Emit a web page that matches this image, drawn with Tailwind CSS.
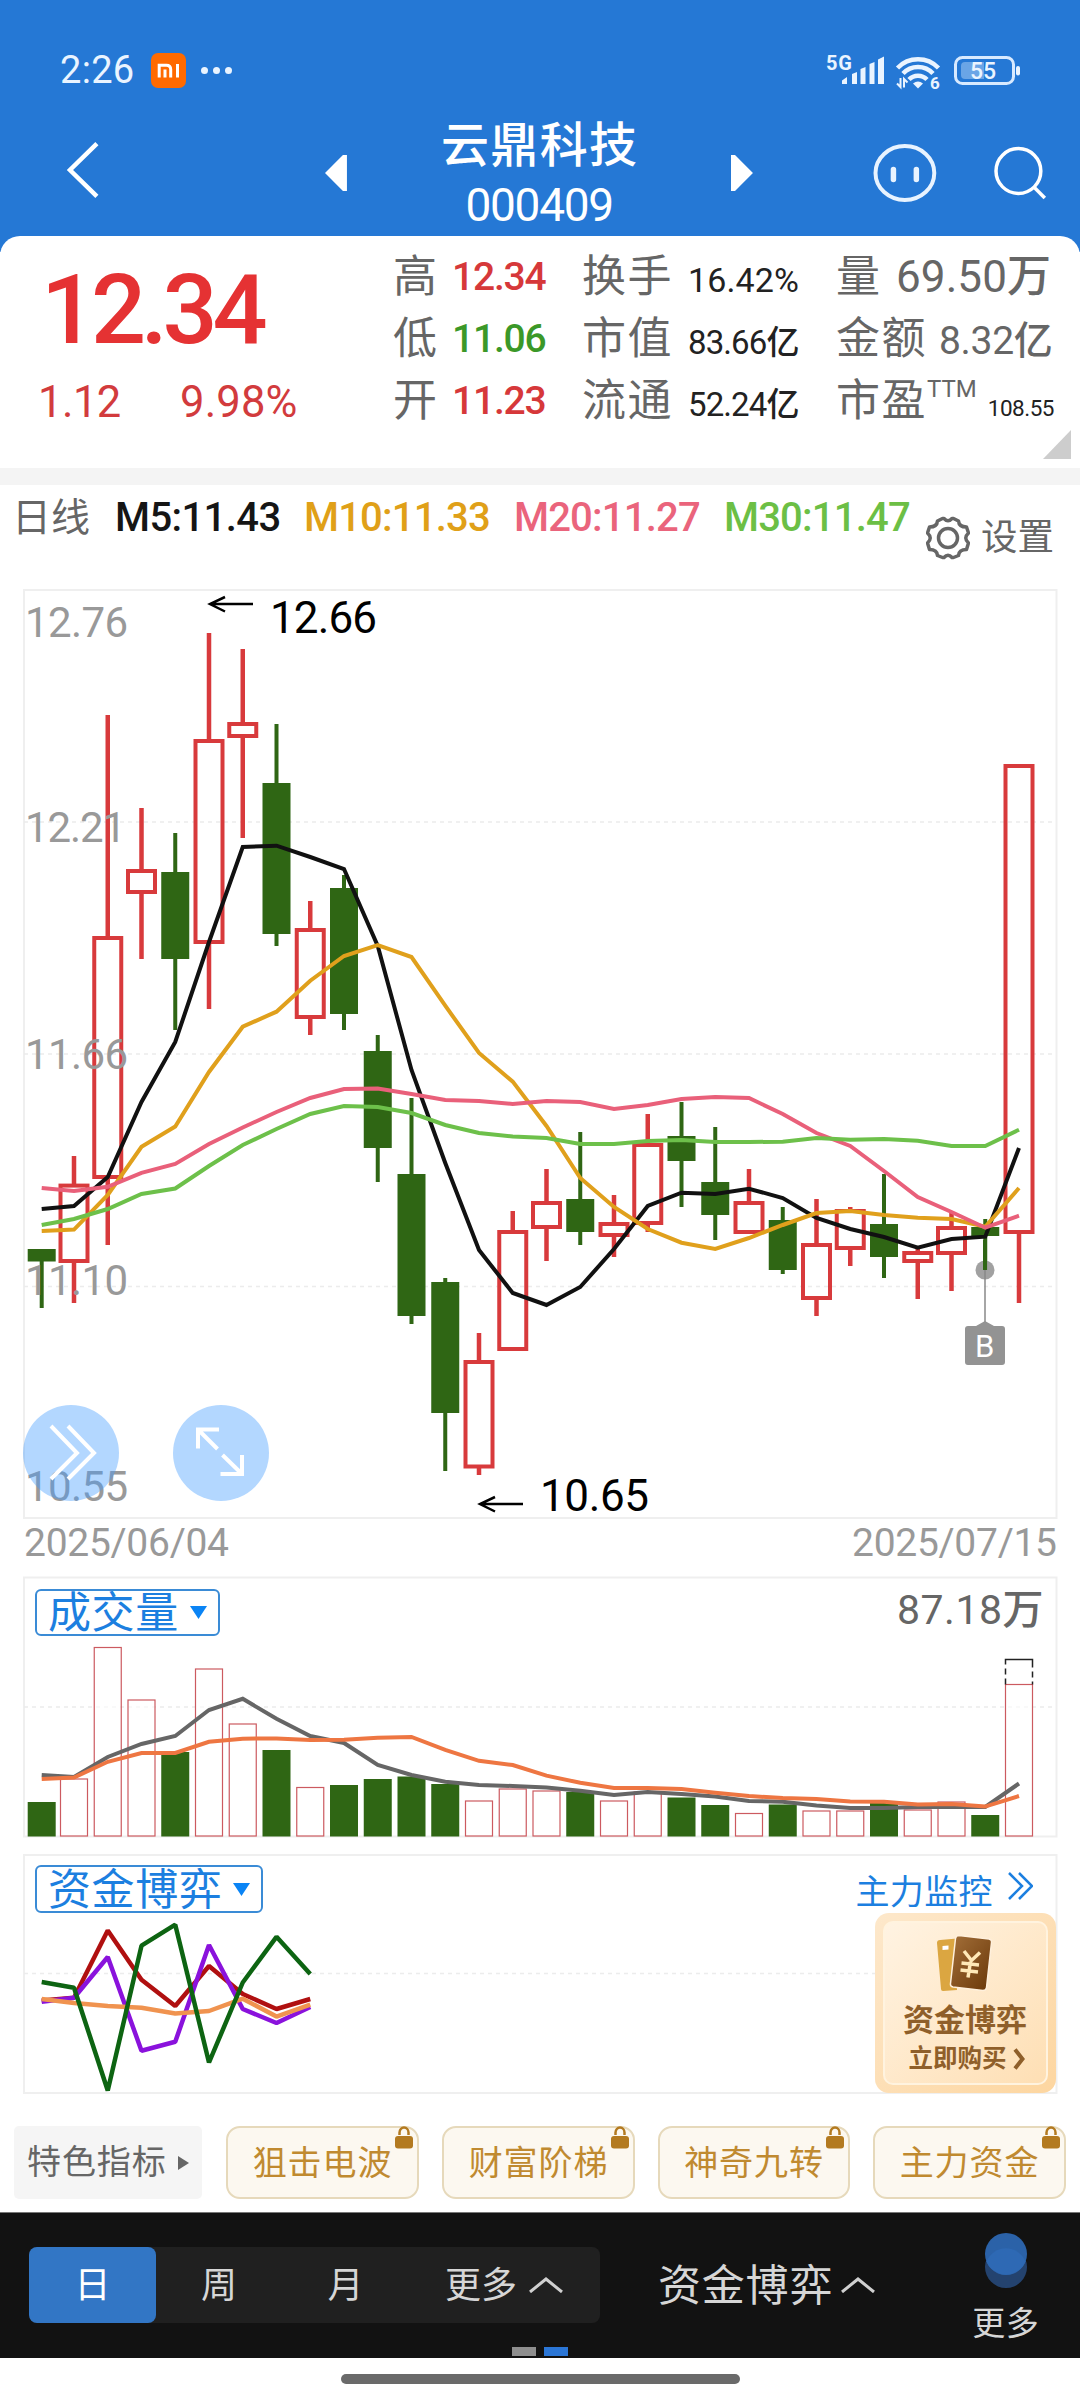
<!DOCTYPE html>
<html lang="zh-CN">
<head>
    <meta charset="UTF-8">
    <meta name="viewport" content="width=device-width, initial-scale=1.0">
    <script src="https://cdn.jsdelivr.net/npm/@tailwindcss/browser@4"></script>
    <title>云鼎科技 000409</title>
</head>
<body class="w-[1080px] h-[2400px] overflow-hidden bg-white font-['Roboto','Noto_Sans_CJK_SC',sans-serif] flex flex-col">
    <!-- header -->
    <div class="bg-[#2578d5] h-[252px] shrink-0 flex flex-col">
        <div class="h-[104px] pt-[36px] pl-[60px] pr-[59px] flex items-center text-[#eaf4ff]">
            <span class="text-[38px] leading-none tracking-[0.3px] w-[91px]">2:26</span>
            <svg class="w-[35px] h-[35px]" viewBox="0 0 35 35">
                <rect width="35" height="35" rx="7" fill="#ff6a00"/>
                <path d="M8.200 24.500V12.200h7.200c2.800 0 4.300 1.500 4.300 4.300v8M14 16.500v8M26.500 11v13.500" fill="none" stroke="#fff" stroke-width="3"/>
            </svg>
            <div class="flex gap-[5px] ml-[15px]">
                <div class="w-[7px] h-[7px] rounded-full bg-[#eaf4ff]"></div>
                <div class="w-[7px] h-[7px] rounded-full bg-[#eaf4ff]"></div>
                <div class="w-[7px] h-[7px] rounded-full bg-[#eaf4ff]"></div>
            </div>
            <svg class="w-[196px] h-[56px] ml-auto" viewBox="825 42 196 56" fill="#eaf4ff">
                <text x="826" y="69.500" font-size="20" font-weight="700" textLength="26">5G</text>
                <path d="M842 84v-3.500l5-3.500v7zM852 84V74l5-2v12zM860.500 84V69l5-2v17zM869.500 84V64l5-2v22zM878 84V59.500l6-3V84z"/>
                <g fill="none" stroke="#eaf4ff" stroke-width="4.500">
                    <path d="M897.500 68a28.500 28.500 0 0 1 41 0M903 73.500a20.500 20.500 0 0 1 30 0M909 79.500a12.500 12.500 0 0 1 18 0"/>
                </g>
                <path d="M913 83.500q5-4 10 0l-5 5z"/>
                <path d="M900.500 78v9l-3.500-3.500M904 87.500V79l3.500 3.500" fill="none" stroke="#eaf4ff" stroke-width="2"/>
                <text x="930" y="88.500" font-size="17" font-weight="700">6</text>
                <rect x="955.500" y="57.500" width="58" height="26" rx="7" fill="none" stroke="#d8eaff" stroke-width="3"/>
                <path d="M961 66q0-4 4-4h19v17h-19q-4 0-4-4z" fill="#6aa5e6"/>
                <rect x="1016" y="66" width="4" height="9.500" rx="2"/>
                <text x="970" y="79" font-size="23" font-weight="500" textLength="26">55</text>
            </svg>
        </div>
        <div class="h-[132px] flex items-center pl-[66px] pr-[33px] text-white">
            <svg class="w-[34px] h-[60px]" viewBox="66 141 34 60"><path d="M97 144.500 70 171l27 26.500" fill="none" stroke="#fff" stroke-width="4.500"/></svg>
            <svg class="w-[22px] h-[36px] ml-[225px] mt-[6px]" viewBox="0 0 22 36"><path d="M22 0v36h-4L0 18 18 0z" fill="#fff"/></svg>
            <div class="w-[386px] flex flex-col items-center pt-[9px]">
                <span class="text-[48px] leading-[60px] tracking-[1.300px] font-[450] pl-[1px]">云鼎科技</span>
                <span class="text-[46px] leading-[58px] tracking-[-1.300px] font-[450]">000409</span>
            </div>
            <svg class="w-[22px] h-[36px] mt-[6px]" viewBox="0 0 22 36"><path d="M0 0v36h4L22 18 4 0z" fill="#fff"/></svg>
            <svg class="w-[64px] h-[60px] ml-[120px] mt-[6px]" viewBox="0 0 64 60">
                <ellipse cx="32" cy="30" rx="29.500" ry="27" fill="none" stroke="#e8f3ff" stroke-width="4"/>
                <path d="M20.500 26.500v10M43.500 26.500v10" stroke="#e8f3ff" stroke-width="5.500" stroke-linecap="round"/>
            </svg>
            <svg class="w-[54px] h-[56px] ml-[56px] mt-[6px]" viewBox="994 145 54 56">
                <circle cx="1019.500" cy="171" r="22.500" fill="none" stroke="#fff" stroke-width="3.500"/>
                <path d="m1035 187 11 11" stroke="#fff" stroke-width="3.500"/>
            </svg>
        </div>
    </div>

    <!-- quote -->
    <div class="relative bg-white rounded-t-[20px] h-[232px] -mt-[16px] shrink-0 flex">
        <div class="w-[393px] pt-[20px] text-[#e53233]">
            <div class="pl-[41px] text-[97px] leading-[108px] font-medium tracking-[-5.200px]">12.34</div>
            <div class="flex pl-[38px] pt-[11px] text-[43.500px] leading-[56px] font-[450] text-[#d23b3d]">
                <span class="w-[142px] tracking-[-0.500px]">1.12</span>
                <span class="tracking-[0.200px]">9.98%</span>
            </div>
        </div>
        <div class="w-[189px] pt-[10px] leading-[62px] text-[#666]">
            <div class="flex h-[62px]"><span class="text-[44px] w-[59px]">高</span><span class="text-[39px] font-medium tracking-[-1.200px] text-[#d6383a]">12.34</span></div>
            <div class="flex h-[62px]"><span class="text-[44px] w-[59px]">低</span><span class="text-[39px] font-medium tracking-[-1.200px] text-[#3b9828]">11.06</span></div>
            <div class="flex h-[62px]"><span class="text-[44px] w-[59px]">开</span><span class="text-[39px] font-medium tracking-[-1.200px] text-[#d6383a]">11.23</span></div>
        </div>
        <div class="w-[254px] pt-[10px] leading-[62px] text-[#666]">
            <div class="flex items-baseline h-[62px]"><span class="text-[44px] tracking-[1.500px] w-[106px]">换手</span><span class="text-[34px] font-[450] tracking-[0.100px] text-[#222]">16.42%</span></div>
            <div class="flex items-baseline h-[62px]"><span class="text-[44px] tracking-[1.500px] w-[106px]">市值</span><span class="text-[33px] font-[450] tracking-[-0.900px] text-[#222]">83.66亿</span></div>
            <div class="flex items-baseline h-[62px]"><span class="text-[44px] tracking-[1.500px] w-[106px]">流通</span><span class="text-[33px] font-[450] tracking-[-0.900px] text-[#222]">52.24亿</span></div>
        </div>
        <div class="w-[218px] pt-[10px] leading-[62px] text-[#666]">
            <div class="flex items-baseline h-[62px]"><span class="text-[44px] w-[60px]">量</span><span class="text-[44px] font-[450] tracking-[0.100px]">69.50万</span></div>
            <div class="flex items-baseline h-[62px]"><span class="text-[44px] tracking-[1.500px] w-[103px]">金额</span><span class="text-[39px] font-[450] tracking-[-0.300px]">8.32亿</span></div>
            <div class="flex items-baseline h-[62px]"><span class="text-[44px] tracking-[1.500px]">市盈</span><span class="text-[24px] leading-none relative -top-[19px]">TTM</span><span class="text-[22.500px] font-[450] ml-auto tracking-[-0.500px] text-[#222]">108.55</span></div>
        </div>
        <svg class="absolute right-[9px] bottom-[9px] w-[28px] h-[29px]" viewBox="0 0 28 29"><path d="M28 0v29H0z" fill="#cdcdcd"/></svg>
    </div>
    <div class="h-[17px] shrink-0 bg-[#f4f4f4]"></div>

    <!-- moving averages -->
    <div class="h-[85px] shrink-0 flex text-[40px] leading-[60px] font-medium pl-[13px] pt-[3px]">
        <span class="text-[39px] font-normal text-[#666] w-[102px] -ml-[1px] mr-[1px]">日线</span>
        <span class="w-[189px] tracking-[-0.600px] text-[#151515]">M5:11.43</span>
        <span class="w-[210px] tracking-[-0.800px] text-[#e0a018]">M10:11.33</span>
        <span class="w-[210px] tracking-[-0.800px] text-[#ea647c]">M20:11.27</span>
        <span class="w-[202px] tracking-[-0.800px] text-[#6cbf45]">M30:11.47</span>
        <svg class="w-[44px] h-[44px] mt-[28px]" viewBox="0 0 44 44" fill="none" stroke="#666" stroke-width="3.500" stroke-linejoin="round">
            <path d="M16.500 2.500h1.500q4 4.500 8 0h1.500l5 2.500q.500 6 8 6l2 6q-5.500 5 0 10l-2 6.500q-7.500 0-8 6l-5 2h-1.500q-4-4.500-8 0h-1.500l-5-2q-.500-6-8-6l-2-6.500q5.500-5 0-10l2-6q7.500 0 8-6z"/>
            <circle cx="22" cy="22" r="9.500"/>
        </svg>
        <span class="ml-[11px] mt-[20px] text-[36.500px] font-normal text-[#666]">设置</span>
    </div>

    <!-- k line -->
    <div class="relative h-[1000px] shrink-0">
        <svg class="w-[1080px] h-[1000px]" viewBox="0 570 1080 1000">
            <rect x="24" y="590" width="1032.500" height="928" fill="none" stroke="#efefef" stroke-width="2"/>
            <path d="M24 822h1032M24 1054h1032M24 1286.500h1032" stroke="#ececec" stroke-width="1.500" stroke-dasharray="4 4"/>
            <g id="candles"></g>
            <g id="averages" fill="none" stroke-width="4"></g>
            <g font-size="42" font-weight="450" fill="#999">
                <text x="25" y="637" textLength="103">12.76</text>
                <text x="25" y="842" textLength="101">12.21</text>
                <text x="25" y="1069" textLength="103">11.66</text>
                <text x="25" y="1295" textLength="103">11.10</text>
                <text x="25" y="1501" textLength="103">10.55</text>
            </g>
            <g font-size="39" font-weight="450" fill="#999">
                <text x="24" y="1556" textLength="205">2025/06/04</text>
                <text x="852" y="1556" textLength="205">2025/07/15</text>
            </g>
            <g fill="none" stroke="#000" stroke-width="2.500">
                <path d="M253 604h-43M225 597l-15 7 15 7.500"/>
                <path d="M523 1504h-43M495 1497l-15 7 15 7.500"/>
            </g>
            <g font-size="44" fill="#000">
                <text x="270" y="633" textLength="107">12.66</text>
                <text x="540" y="1511" textLength="109">10.65</text>
            </g>
            <circle cx="985" cy="1270" r="9.500" fill="#8a8a8a" fill-opacity=".8"/>
            <path d="M985 1270v54" stroke="#888" stroke-width="1.500"/>
            <path d="M985 1240v30" stroke="#2f6614" stroke-width="4"/>
            <path d="M968 1326h8l9-5 9 5h8q3 0 3 3v33q0 3-3 3h-34q-3 0-3-3v-33q0-3 3-3z" fill="#939393"/>
            <text x="975" y="1357" font-size="31" fill="#fff">B</text>
        </svg>
        <div class="absolute left-[23px] top-[835px] w-[96px] h-[96px] rounded-full bg-[#419bff]/40">
            <svg class="w-[96px] h-[96px]" viewBox="23 1405 96 96"><path d="m51 1426 26 27-26 26M68 1426l26 27-26 26" fill="none" stroke="#fff" stroke-width="4"/></svg>
        </div>
        <div class="absolute left-[173px] top-[835px] w-[96px] h-[96px] rounded-full bg-[#419bff]/40">
            <svg class="w-[96px] h-[96px]" viewBox="173 1405 96 96"><path d="M219 1429.500h-21v19M198 1429.500l19.500 19.500M220.500 1474h21.500v-19M242 1474l-19.500-19" fill="none" stroke="#fff" stroke-width="4"/></svg>
        </div>
    </div>

    <!-- volume -->
    <div class="relative h-[276px] shrink-0">
        <svg class="w-[1080px] h-[276px]" viewBox="0 1570 1080 276">
            <rect x="24" y="1577.500" width="1032.500" height="259" fill="none" stroke="#efefef" stroke-width="2"/>
            <path d="M24 1707h1032" stroke="#ececec" stroke-width="1.500" stroke-dasharray="4 4"/>
            <g id="volumes"></g>
            <path d="M1005.500 1684.500v-25h27v25" fill="none" stroke="#222" stroke-width="1.500" stroke-dasharray="6 4 6 4 40 4 6 4"/>
            <g id="volumeLines" fill="none" stroke-width="4"></g>
        </svg>
        <div class="absolute left-[35px] top-[19px] w-[185px] h-[47px] rounded-[6px] border-2 border-[#3a8bd6] bg-white flex items-center pl-[11px] text-[#1c7fe0]">
            <span class="text-[43px] leading-none tracking-[0.600px] pt-[2px]">成交量</span>
            <svg class="w-[17px] h-[13px] ml-[11px]" viewBox="0 0 17 13"><path d="M0 0h17L8.500 13z" fill="#0a84f5"/></svg>
        </div>
        <div class="absolute right-[36px] top-[12px] text-[41px] leading-[56px] font-[450] text-[#666] tracking-[0.500px]">87.18万</div>
    </div>

    <!-- fund game -->
    <div class="relative h-[270px] shrink-0">
        <svg class="w-[1080px] h-[270px]" viewBox="0 1846 1080 270">
            <rect x="24" y="1855" width="1032.500" height="238" fill="none" stroke="#efefef" stroke-width="2"/>
            <path d="M24 1973.500h1032" stroke="#ececec" stroke-width="1.500" stroke-dasharray="4 4"/>
            <g id="fundLines" fill="none" stroke-width="4.500" stroke-linejoin="bevel"></g>
        </svg>
        <div class="absolute left-[35px] top-[19px] w-[228px] h-[48px] rounded-[6px] border-2 border-[#3a8bd6] bg-white flex items-center pl-[11px] text-[#1c7fe0]">
            <span class="text-[43px] leading-none tracking-[0.600px] pt-[2px]">资金博弈</span>
            <svg class="w-[17px] h-[13px] ml-[11px]" viewBox="0 0 17 13"><path d="M0 0h17L8.500 13z" fill="#0a84f5"/></svg>
        </div>
        <div class="absolute right-[47px] top-[20px] flex text-[34px] leading-[52px] text-[#1c7fe0]">
            <span class="tracking-[0.400px]">主力监控</span>
            <svg class="w-[25px] h-[28px] ml-[15px] mt-[6px]" viewBox="0 0 25 28"><path d="m1 1 13 13L1 27M11 1l13 13-13 13" fill="none" stroke="#1c7fe0" stroke-width="2.500"/></svg>
        </div>
        <div class="absolute left-[875px] top-[67px] w-[181px] h-[180px] rounded-[14px] bg-linear-to-br from-[#fde8cb] to-[#fdd6a0] p-[8px]">
            <div class="w-[165px] h-[164px] rounded-[10px] border-2 border-[#fff3df] bg-linear-to-br from-[#fff3e2] to-[#fedfb4] flex flex-col items-center text-[#8f5f2a]">
                <svg class="w-[56px] h-[58px] mt-[11px] mr-[3px]" viewBox="937 1934 56 58">
                    <defs><linearGradient id="card" x2="1" y2="1"><stop stop-color="#a4703a"/><stop offset="1" stop-color="#693708"/></linearGradient></defs>
                    <path d="m941 1940 17-1.500v51.500l-14 1q-2 0-2-2l-4-46q0-3 3-3z" fill="#dba641"/>
                    <path d="m943.500 1946 6-.500v4l-6 .500z" fill="#fff"/>
                    <path d="m960 1935.500 30 3.500q3 .500 2.500 3.500l-5 45q-.500 3-3.500 3l-30-3.500q-3-.500-2.500-3.500l5-45q.500-3 3.500-3z" fill="url(#card)" stroke="#fff0dc" stroke-width="1.500"/>
                    <path d="m965 1951 7.500 9.500 8.500-8M971.500 1961.500l-2.500 16M962.500 1963l17.500 2M961.500 1970l17.500 2" fill="none" stroke="#ffe9b8" stroke-width="3.500"/>
                </svg>
                <span class="text-[31px] leading-[36px] font-bold mt-[11px] ml-[-1px]">资金博弈</span>
                <div class="flex items-center mt-[5px] ml-[2px]">
                    <span class="text-[24.500px] leading-[30px] font-bold">立即购买</span>
                    <svg class="w-[12px] h-[22px] ml-[6px]" viewBox="0 0 12 22"><path d="m2 1.500 7.500 9.500L2 20.500" fill="none" stroke="#8f5f2a" stroke-width="4"/></svg>
                </div>
            </div>
        </div>
    </div>

    <!-- indicators -->
    <div class="h-[96px] shrink-0 flex pt-[10px] pl-[14px] text-[34px] text-[#c08a30]">
        <div class="w-[188px] h-[73px] rounded-[5px] bg-[#f5f5f5] flex items-center pl-[13px] text-[#666]">
            <span class="tracking-[0.900px]">特色指标</span>
            <svg class="w-[11px] h-[14px] ml-[11px]" viewBox="0 0 11 14"><path d="M0 0v14l11-7z" fill="#666"/></svg>
        </div>
        <div class="relative w-[193px] h-[73px] ml-[24px] rounded-[14px] border-2 border-[#e6d9bb] bg-[#fcf8f0] flex items-center justify-center tracking-[0.900px] pt-[2px]">狙击电波
            <svg class="absolute right-[4px] -top-[2px] w-[18px] h-[23px]" viewBox="0 0 18 23"><rect y="10" width="18" height="12.500" rx="3" fill="#b37a20"/><path d="M4.500 9V6.500a4.500 5 0 0 1 9 0V9" fill="none" stroke="#b37a20" stroke-width="2.500"/></svg>
        </div>
        <div class="relative w-[193px] h-[73px] ml-[23px] rounded-[14px] border-2 border-[#e6d9bb] bg-[#fcf8f0] flex items-center justify-center tracking-[0.900px] pt-[2px]">财富阶梯
            <svg class="absolute right-[4px] -top-[2px] w-[18px] h-[23px]" viewBox="0 0 18 23"><rect y="10" width="18" height="12.500" rx="3" fill="#b37a20"/><path d="M4.500 9V6.500a4.500 5 0 0 1 9 0V9" fill="none" stroke="#b37a20" stroke-width="2.500"/></svg>
        </div>
        <div class="relative w-[192px] h-[73px] ml-[23px] rounded-[14px] border-2 border-[#e6d9bb] bg-[#fcf8f0] flex items-center justify-center tracking-[0.900px] pt-[2px]">神奇九转
            <svg class="absolute right-[4px] -top-[2px] w-[18px] h-[23px]" viewBox="0 0 18 23"><rect y="10" width="18" height="12.500" rx="3" fill="#b37a20"/><path d="M4.500 9V6.500a4.500 5 0 0 1 9 0V9" fill="none" stroke="#b37a20" stroke-width="2.500"/></svg>
        </div>
        <div class="relative w-[193px] h-[73px] ml-[23px] rounded-[14px] border-2 border-[#e6d9bb] bg-[#fcf8f0] flex items-center justify-center tracking-[0.900px] pt-[2px]">主力资金
            <svg class="absolute right-[4px] -top-[2px] w-[18px] h-[23px]" viewBox="0 0 18 23"><rect y="10" width="18" height="12.500" rx="3" fill="#b37a20"/><path d="M4.500 9V6.500a4.500 5 0 0 1 9 0V9" fill="none" stroke="#b37a20" stroke-width="2.500"/></svg>
        </div>
    </div>

    <!-- period bar -->
    <div class="relative h-[146px] shrink-0 bg-[#121212] border-t border-[#777] flex text-[#d6d6d6]">
        <div class="ml-[29px] mt-[34px] w-[571px] h-[76px] rounded-[8px] bg-[#202020] flex items-center text-[36px]">
            <div class="w-[127px] h-[76px] rounded-[8px] bg-[#3276c5] text-white flex items-center justify-center pt-[2px]">日</div>
            <div class="w-[126px] text-center pt-[2px]">周</div>
            <div class="w-[127px] text-center pt-[2px]">月</div>
            <div class="flex items-center pl-[36px]">
                <span class="pt-[2px]">更多</span>
                <svg class="w-[34px] h-[16px] ml-[12px]" viewBox="0 0 34 16"><path d="M1 15 17 2l16 13" fill="none" stroke="#d0d0d0" stroke-width="3"/></svg>
            </div>
        </div>
        <div class="ml-[58px] h-[144px] flex items-center">
            <span class="text-[43px] tracking-[0.800px] pt-[2px]">资金博弈</span>
            <svg class="w-[34px] h-[16px] ml-[8px]" viewBox="0 0 34 16"><path d="M1 15 17 2l16 13" fill="none" stroke="#d0d0d0" stroke-width="3"/></svg>
        </div>
        <div class="ml-[97px] pt-[19px] flex flex-col items-center">
            <svg class="w-[44px] h-[58px]" viewBox="0 0 44 58">
                <circle cx="22" cy="35" r="21" fill="#24436f"/>
                <circle cx="22" cy="22" r="21" fill="#2b62a8"/>
                <path d="M2.500 29.500a21 21 0 0 1 39 0 21 21 0 0 1-39 0z" fill="#2e69b4"/>
            </svg>
            <span class="text-[33px] leading-[50px] mt-[9px] tracking-[0.500px]">更多</span>
        </div>
        <div class="absolute left-[512px] top-[134px] flex gap-[8px]">
            <div class="w-[24px] h-[9px] bg-[#8e8e8e]"></div>
            <div class="w-[24px] h-[9px] bg-[#2b76d6]"></div>
        </div>
    </div>
    <div class="h-[42px] shrink-0 flex justify-center pt-[16px]">
        <div class="w-[399px] h-[10px] rounded-full bg-[#6a6a6a]"></div>
    </div>

    <script>
        const RED = '#d83a3c', GREEN = '#2f6614';
        const cx = i => i === 0 ? 41.7 : 74 + 33.75 * (i - 1);

        // up, high, top, bottom, low, volume top
        const bars = [
            [0,1249,1249,1261.5,1308,1802],[1,1156,1183.6,1263,1303,1779],[1,715,936,1179,1245,1647.5],
            [1,808,869,894,959,1700],[0,833,872,959,1030,1752],[1,633,739,944,1009,1669],
            [1,649,722,738,838,1724],[0,724,783,934,946,1750],[1,901,928,1019,1035,1787.5],
            [0,875,888,1014,1030,1785],[0,1035,1051,1148,1182,1779],[0,1098,1174,1316,1324,1776.5],
            [0,1278,1282,1413,1471,1784],[1,1333,1360,1468.5,1475,1801],[1,1211,1230,1351,1351,1789],
            [1,1169,1201,1229,1261,1791],[0,1132,1199,1232,1245,1792],[1,1195,1222,1237,1257,1801],
            [1,1114,1143,1225,1232,1792],[0,1102,1136,1161,1207,1797.5],[0,1127,1182,1215,1240,1805],
            [1,1169,1201,1234,1234,1813.5],[0,1207,1220,1270,1274,1804.5],[1,1199,1243,1300,1316,1811],
            [1,1207,1209,1250,1266,1811],[0,1174,1224,1257,1278,1803],[1,1248,1251,1263,1299,1810],
            [1,1213,1226,1255,1291,1802],[0,1219,1227,1236,1270,1815],[1,764,764,1234,1303,1684.5]
        ];

        let candles = '', volumes = '';
        bars.forEach(([up, high, top, bottom, low, vol], i) => {
            const x = cx(i);
            if (up) {
                candles += `<path d="M${x} ${high}V${top + 1}M${x} ${bottom - 1}V${low}" stroke="${RED}" stroke-width="4.5"/>`;
                candles += `<rect x="${x - 13.5}" y="${top + 2}" width="27" height="${bottom - top - 4}" fill="none" stroke="${RED}" stroke-width="4"/>`;
                volumes += `<rect x="${x - 13.5}" y="${vol}" width="27" height="${1836 - vol}" fill="#fff" fill-opacity=".6" stroke="#cc5a60" stroke-width="1.2"/>`;
            } else {
                candles += `<path d="M${x} ${high}V${low}" stroke="${GREEN}" stroke-width="4"/>`;
                candles += `<rect x="${x - 14}" y="${top}" width="28" height="${bottom - top}" fill="${GREEN}"/>`;
                volumes += `<rect x="${x - 14}" y="${vol}" width="28" height="${1836.5 - vol}" fill="${GREEN}"/>`;
            }
        });
        document.getElementById('candles').innerHTML = candles;
        document.getElementById('volumes').innerHTML = volumes;

        function drawLines(id, lines) {
            document.getElementById(id).innerHTML = lines.map(([color, ys]) =>
                `<polyline stroke="${color}" points="${ys.map((y, i) => cx(i) + ',' + y).join(' ')}"/>`).join('');
        }

        drawLines('averages', [
            ['#111', [1209,1206,1177,1102,1042,942,847,845.7,857,869,946,1070,1163,1250,1293,1305,1287,1249,1206,1192.7,1194,1188.7,1198,1218,1229,1237,1247.7,1239,1236.7,1148]],
            ['#e0a01c', [1231,1229.6,1195,1146.8,1126.5,1072,1026.7,1011.7,980.7,956,945,957,1005.7,1053,1081.6,1126,1178,1207,1229,1242.7,1249,1238,1225,1213,1211,1215,1217.7,1219,1226.7,1188]],
            ['#e9607a', [1188,1191,1186.8,1172.8,1164,1144,1127.5,1112,1098,1089,1088.6,1094,1100,1101,1104,1101,1102,1109,1105,1099,1097,1098,1114,1133,1146,1171,1197,1212,1227.7,1215.7]],
            ['#6dc04a', [1225,1219,1209,1194,1188.5,1166,1145,1129,1114,1106,1107,1113,1125,1133,1136.6,1138,1144,1144,1141,1140,1142,1142,1141.7,1138,1139.7,1139,1140.7,1146,1146,1129.7]]
        ]);
        drawLines('volumeLines', [
            ['#666', [1775,1777,1757,1744,1736,1710,1698.8,1718.8,1736,1743,1765,1775,1781.8,1785,1786,1787.6,1790.7,1795,1792,1794,1796.6,1801,1801.8,1805.5,1808,1808,1807,1807,1807,1783.5]],
            ['#ee7642', [1779,1777.6,1761.8,1753,1753,1741.8,1738.7,1738.4,1740,1739.8,1737.7,1737,1749.8,1760.8,1765,1775.6,1782.8,1788,1788,1789,1792.8,1796,1798,1799,1801.4,1801.8,1804.5,1804,1806.6,1796]]
        ]);
        drawLines('fundLines', [
            ['#b01010', [2000.5,1997.7,1930.6,1979.8,2006,1966,1994,2009,1999]],
            ['#8a12dc', [2001.8,1997.7,1957,2050.7,2041.8,1945,2009,2023,2007]],
            ['#f0934f', [1999,2003,2006,2007.7,2013.5,2011,1998.7,2016.6,2004.6]],
            ['#0d6412', [1982,1987.7,2090.5,1945.7,1924.7,2062.5,1982.5,1936.8,1974]]
        ]);
    </script>
</body>
</html>
